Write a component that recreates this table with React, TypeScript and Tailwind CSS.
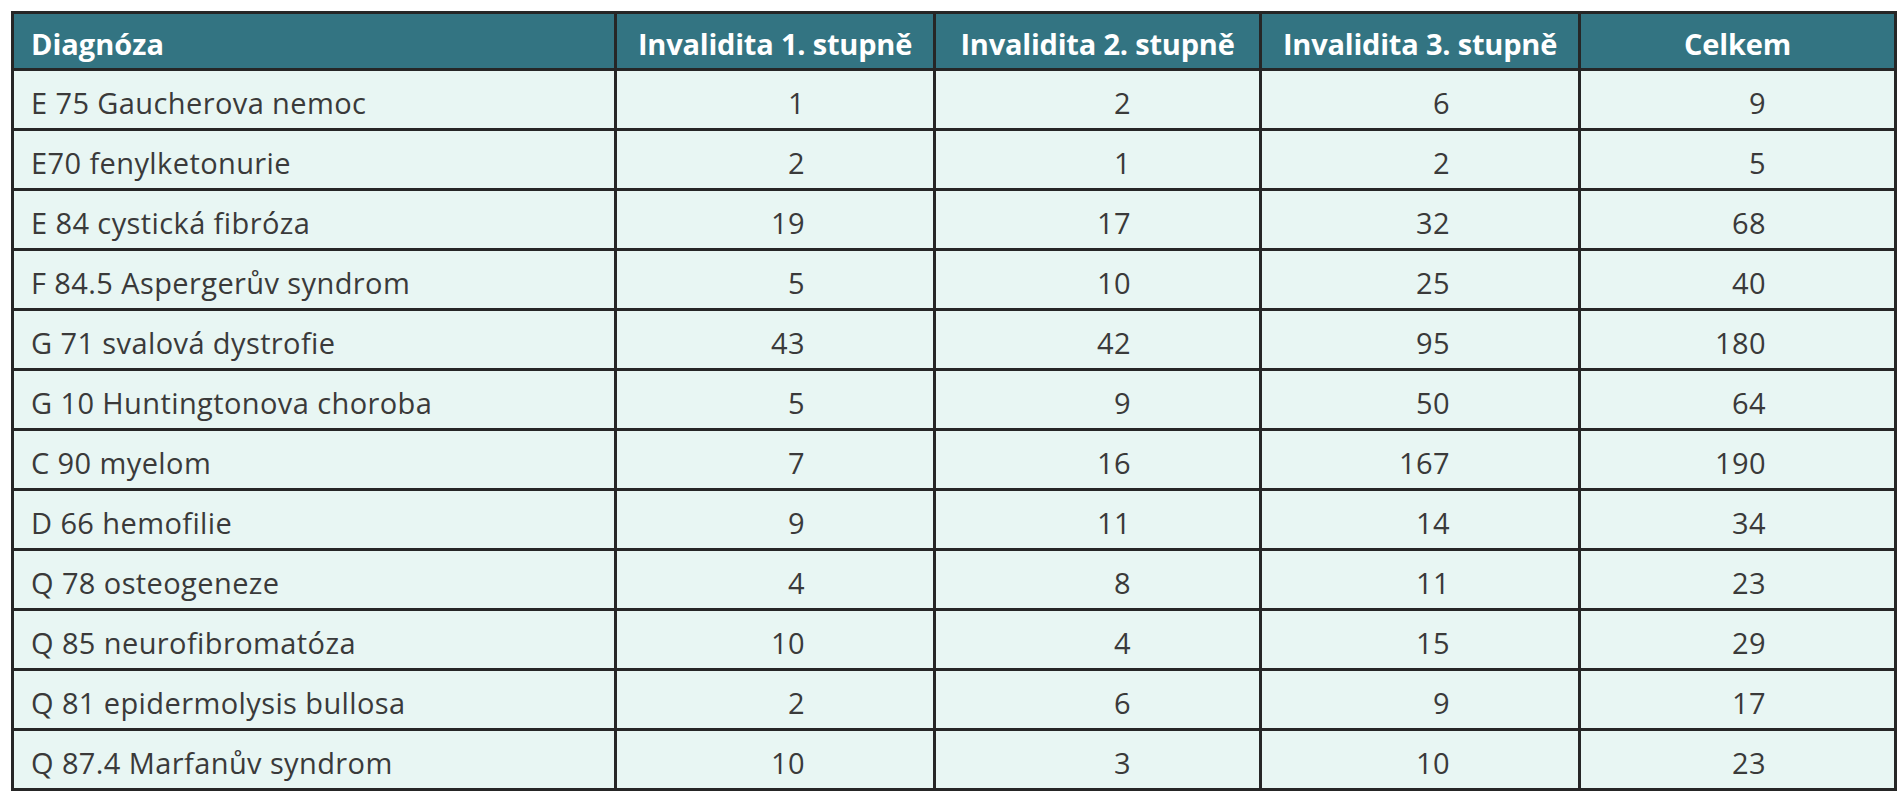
const rows: [string, number, number, number, number][] = [
  ["E 75 Gaucherova nemoc", 1, 2, 6, 9],
  ["E70 fenylketonurie", 2, 1, 2, 5],
  ["E 84 cystická fibróza", 19, 17, 32, 68],
  ["F 84.5 Aspergerův syndrom", 5, 10, 25, 40],
  ["G 71 svalová dystrofie", 43, 42, 95, 180],
  ["G 10 Huntingtonova choroba", 5, 9, 50, 64],
  ["C 90 myelom", 7, 16, 167, 190],
  ["D 66 hemofilie", 9, 11, 14, 34],
  ["Q 78 osteogeneze", 4, 8, 11, 23],
  ["Q 85 neurofibromatóza", 10, 4, 15, 29],
  ["Q 81 epidermolysis bullosa", 2, 6, 9, 17],
  ["Q 87.4 Marfanův syndrom", 10, 3, 10, 23],
];

const headers = ["Invalidita 1. stupně", "Invalidita 2. stupně", "Invalidita 3. stupně", "Celkem"];

export default function App() {
  return (
    <div className="min-h-screen bg-white p-[11px] font-['Open_Sans',sans-serif]">
      <table className="w-[1883px] table-fixed border-collapse border-[3px] border-[#262626] bg-[#e8f6f3] text-[#3a3a3a]">
        <colgroup>
          <col className="w-[603px]" />
          <col className="w-[319px]" />
          <col className="w-[326px]" />
          <col className="w-[319px]" />
          <col className="w-[316px]" />
        </colgroup>
        <thead>
          <tr className="h-[57px] bg-[#337482] text-white">
            <th className="border-[3px] border-[#262626] pl-[17px] pt-[6px] text-left text-[29px] font-bold">
              Diagnóza
            </th>
            {headers.map((h) => (
              <th
                key={h}
                className="border-[3px] border-[#262626] pt-[6px] text-center text-[29px] font-bold tracking-[-0.2px] whitespace-nowrap"
              >
                {h}
              </th>
            ))}
          </tr>
        </thead>
        <tbody>
          {rows.map(([name, a, b, c, total]) => (
            <tr key={name} className="h-[60px] text-[29px] tracking-[0.4px]">
              <td className="border-[3px] border-[#262626] pl-[17px] pt-[6px] whitespace-nowrap">{name}</td>
              {[a, b, c, total].map((n, i) => (
                <td key={i} className="border-[3px] border-[#262626] pr-[128px] pt-[6px] text-right">
                  {n}
                </td>
              ))}
            </tr>
          ))}
        </tbody>
      </table>
    </div>
  );
}
